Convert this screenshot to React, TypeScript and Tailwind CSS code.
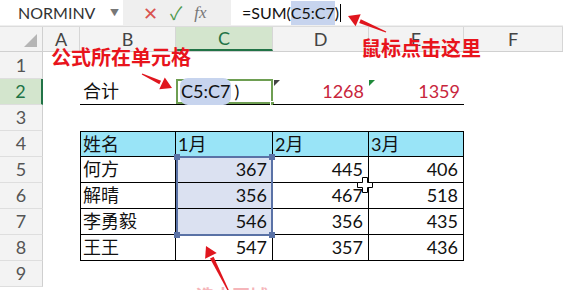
import React from "react";

const font = { fontFamily: 'Lato, "Noto Sans CJK SC", sans-serif' };

const W = { rh: 43, A: 37, B: 96, C: 97, D: 96, E: 95, F: 99 };

function Arrow({ x1, y1, x2, y2 }: { x1: number; y1: number; x2: number; y2: number }) {
  const dx = x2 - x1;
  const dy = y2 - y1;
  const len = Math.hypot(dx, dy);
  const ux = dx / len;
  const uy = dy / len;
  const px = -uy;
  const py = ux;
  const headLen = 13;
  const headW = 6.5;
  const bx = x2 - ux * headLen;
  const by = y2 - uy * headLen;
  const shaft = [
    [x1 + px * 0.6, y1 + py * 0.6],
    [bx + px * 2, by + py * 2],
    [bx - px * 2, by - py * 2],
    [x1 - px * 0.6, y1 - py * 0.6],
  ];
  const head = [
    [x2, y2],
    [bx + px * headW + ux * 2, by + py * headW + uy * 2],
    [bx - px * headW + ux * 2, by - py * headW + uy * 2],
  ];
  return (
    <g fill="#e0161e">
      <polygon points={shaft.map((p) => p.join(",")).join(" ")} />
      <polygon points={head.map((p) => p.join(",")).join(" ")} />
    </g>
  );
}

function ColHeader({ w, label, active }: { w: number; label: string; active?: boolean }) {
  return (
    <div
      style={{ width: w }}
      className={
        "h-full flex items-center justify-center text-[18px] border-r border-[#d6d6d6] " +
        (active ? "bg-[#d3e5cd] text-[#217346] border-b-2 border-b-[#217346]" : "text-[#444]")
      }
    >
      {label}
    </div>
  );
}

function RowHead({ n, h, active }: { n: number; h: number; active?: boolean }) {
  return (
    <div
      style={{ width: W.rh, height: h }}
      className={
        "shrink-0 flex items-center justify-center text-[18px] border-b border-[#dedede] " +
        (active
          ? "bg-[#d3e5cd] text-[#217346] border-r-2 border-r-[#217346]"
          : "bg-[#f3f3f3] text-[#555] border-r border-r-[#cfcfcf]")
      }
    >
      {n}
    </div>
  );
}

function Cell({
  w,
  children,
  cls = "",
}: {
  w: number;
  children?: React.ReactNode;
  cls?: string;
}) {
  return (
    <div style={{ width: w }} className={"shrink-0 h-full flex items-center text-[18px] text-[#111] " + cls}>
      {children}
    </div>
  );
}

const data = [
  ["何方", "367", "445", "406"],
  ["解晴", "356", "467", "518"],
  ["李勇毅", "546", "356", "435"],
  ["王王", "547", "357", "436"],
];

export default function App() {
  const rowH = 26;
  return (
    <div className="relative w-[563px] h-[290px] overflow-hidden bg-white" style={font}>
      {/* formula bar */}
      <div className="h-[27px] bg-[#efefef] flex items-start border-b border-[#dcdcdc]">
        <div className="w-[123px] h-[25px] bg-white flex items-center pl-[18px] pr-[4px] text-[16px] text-[#333]">
          <span className="flex-1">NORMINV</span>
          <span className="text-[9px] text-[#777]">▼</span>
        </div>
        <div className="w-[108px] h-[25px] flex items-center pl-[20px] gap-[12px]">
          <span className="text-[#d9534f] text-[18px] leading-none">✕</span>
          <span className="text-[#4f9a4f] text-[18px] leading-none">✓</span>
          <span className="text-[#777] text-[17px] italic" style={{ fontFamily: '"Liberation Serif", serif' }}>
            fx
          </span>
        </div>
        <div className="flex-1 h-[25px] bg-white flex items-center pl-[11px] text-[16px] text-[#111]">
          <span>=SUM(</span>
          <span className="bg-[#c7d4ee]">C5:C7</span>
          <span>)</span>
          <span className="w-px h-[18px] bg-black ml-[1px]" />
        </div>
      </div>

      {/* column headers */}
      <div className="h-[25px] flex bg-[#f3f3f3] border-b border-[#d0d0d0]">
        <div style={{ width: W.rh }} className="h-full relative border-r border-[#d0d0d0]">
          <div className="absolute right-[5px] bottom-[4px] w-0 h-0 border-l-[13px] border-l-transparent border-b-[13px] border-b-[#b5b5b5]" />
        </div>
        <ColHeader w={W.A} label="A" />
        <ColHeader w={W.B} label="B" />
        <ColHeader w={W.C} label="C" active />
        <ColHeader w={W.D} label="D" />
        <ColHeader w={W.E} label="E" />
        <ColHeader w={W.F} label="F" />
      </div>

      {/* row 1 */}
      <div className="flex h-[27px]">
        <RowHead n={1} h={27} />
      </div>

      {/* row 2 */}
      <div className="flex" style={{ height: rowH }}>
        <RowHead n={2} h={rowH} active />
        <Cell w={W.A} />
        <Cell w={W.B} cls="pl-[3px] border-b border-black">合计</Cell>
        <Cell w={W.C} cls="border-b border-black">
          <div className="relative w-full h-full border-2 border-[#6e9e52] flex items-center pl-[2px]">
            <span className="bg-[#c7d4ee] rounded-[8px] px-[1px]">C5:C7</span>
            <span className="ml-[3px]">)</span>
            <div className="absolute -right-[4px] -bottom-[4px] w-[5px] h-[5px] bg-[#6e9e52] border border-white" />
          </div>
        </Cell>
        <Cell w={W.D} cls="justify-end pr-[5px] text-[#c8253c] border-b border-black relative">
          <div className="absolute left-[1px] top-[1px] w-0 h-0 border-r-[6px] border-r-transparent border-t-[6px] border-t-[#444]" />
          1268
        </Cell>
        <Cell w={W.E} cls="justify-end pr-[4px] text-[#c8253c] border-b border-black relative">
          <div className="absolute left-[0px] top-[1px] w-0 h-0 border-r-[6px] border-r-transparent border-t-[6px] border-t-[#1f8a3a]" />
          1359
        </Cell>
      </div>

      {/* row 3 */}
      <div className="flex" style={{ height: rowH }}>
        <RowHead n={3} h={rowH} />
      </div>

      {/* row 4 header */}
      <div className="flex" style={{ height: rowH }}>
        <RowHead n={4} h={rowH} />
        <Cell w={W.A} />
        <Cell w={W.B} cls="pl-[2px] bg-[#99e4f7] border border-black">姓名</Cell>
        <Cell w={W.C} cls="pl-[2px] bg-[#99e4f7] border-y border-r border-black">1月</Cell>
        <Cell w={W.D} cls="pl-[2px] bg-[#99e4f7] border-y border-r border-black">2月</Cell>
        <Cell w={W.E} cls="pl-[2px] bg-[#99e4f7] border-y border-r border-black">3月</Cell>
      </div>

      {data.map((r, i) => (
        <div key={i} className="flex" style={{ height: rowH }}>
          <RowHead n={5 + i} h={rowH} />
          <Cell w={W.A} />
          <Cell w={W.B} cls="pl-[2px] border-x border-b border-black">{r[0]}</Cell>
          <Cell w={W.C} cls={"justify-end pr-[5px] border-r border-b border-black " + (i < 3 ? "bg-[#dbe1f1]" : "")}>
            {r[1]}
          </Cell>
          <Cell w={W.D} cls="justify-end pr-[5px] border-r border-b border-black">{r[2]}</Cell>
          <Cell w={W.E} cls="justify-end pr-[5px] border-r border-b border-black">{r[3]}</Cell>
        </div>
      ))}

      {/* row 9 */}
      <div className="flex" style={{ height: rowH }}>
        <RowHead n={9} h={rowH} />
      </div>

      {/* selection C5:C7 */}
      <div className="absolute left-[176px] top-[156px] w-[97px] h-[80px] border-2 border-[#5a72a6] pointer-events-none">
        <div className="absolute -left-[4px] -top-[4px] w-[6px] h-[6px] bg-[#5a72a6]" />
        <div className="absolute -right-[4px] -top-[4px] w-[6px] h-[6px] bg-[#5a72a6]" />
        <div className="absolute -left-[4px] -bottom-[4px] w-[6px] h-[6px] bg-[#5a72a6]" />
        <div className="absolute -right-[4px] -bottom-[4px] w-[6px] h-[6px] bg-[#5a72a6]" />
      </div>

      {/* cursor */}
      <svg className="absolute left-[357px] top-[177px]" width="17" height="17" viewBox="0 0 17 17">
        <path d="M5.5 0.5h5v5h5v5h-5v5h-5v-5h-5v-5h5z" fill="#fff" stroke="#000" strokeWidth="1" />
      </svg>

      {/* annotations */}
      <div className="absolute left-[51px] top-[47px] text-[20px] font-bold text-[#e8141c] leading-none">
        公式所在单元格
      </div>
      <div className="absolute left-[361px] top-[38px] text-[20px] font-bold text-[#e8141c] leading-none">
        鼠标点击这里
      </div>
      <div className="absolute left-[196px] top-[287px] text-[18px] font-bold text-[#f5b5b9] leading-none">
        选中区域
      </div>
      <svg className="absolute left-0 top-0 pointer-events-none" width="563" height="290">
        <Arrow x1={386} x2={348} y1={32} y2={16} />
        <Arrow x1={142} x2={172} y1={74} y2={88} />
        <Arrow x1={229} x2={206} y1={292} y2={246} />
      </svg>
    </div>
  );
}
